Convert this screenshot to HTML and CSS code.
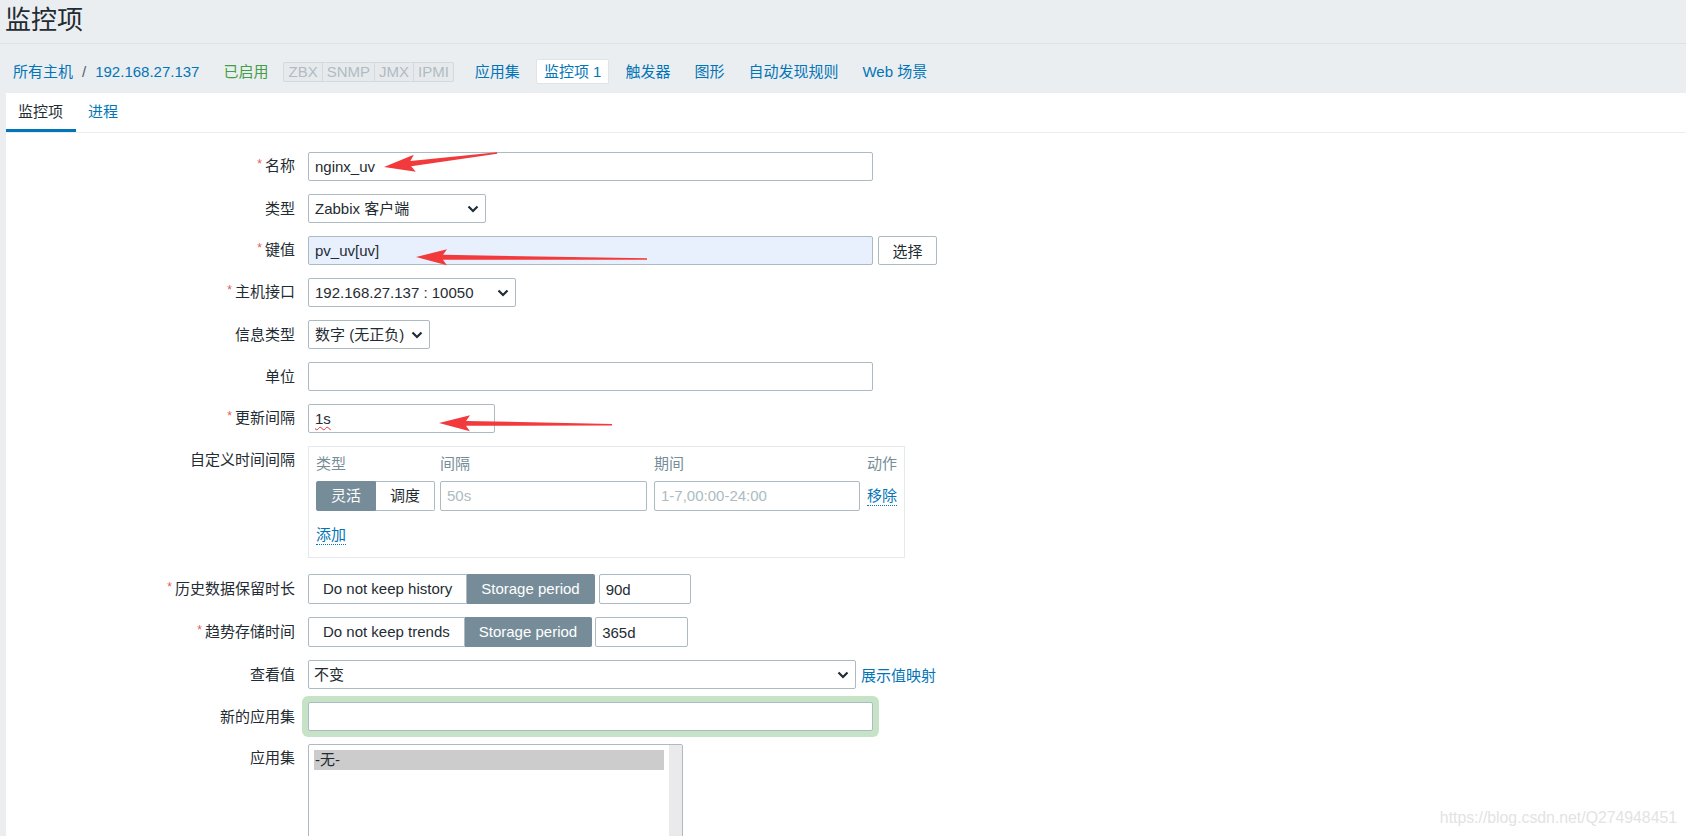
FILE: index.html
```html
<!DOCTYPE html>
<html lang="zh-CN">
<head>
<meta charset="utf-8">
<title>监控项</title>
<link rel="stylesheet" href="styles.css">
</head>
<body>
<header class="page-header">
  <h1 class="page-title">监控项</h1>
</header>

<nav class="host-nav">
  <a class="link crumb">所有主机</a>
  <span class="crumb-sep">/</span>
  <a class="link crumb">192.168.27.137</a>
  <span class="status-on">已启用</span>
  <span class="avail">
    <span class="avail-cell">ZBX</span><span class="avail-cell">SNMP</span><span class="avail-cell">JMX</span><span class="avail-cell">IPMI</span>
  </span>
  <ul class="host-tabs">
    <li><a class="link">应用集</a></li>
    <li class="selected"><a class="link">监控项 1</a></li>
    <li><a class="link">触发器</a></li>
    <li><a class="link">图形</a></li>
    <li><a class="link">自动发现规则</a></li>
    <li><a class="link">Web 场景</a></li>
  </ul>
</nav>

<main class="panel">
  <div class="tabs">
    <a class="tab active">监控项</a>
    <a class="tab link">进程</a>
  </div>

  <form class="form">
    <div class="row">
      <label class="lbl"><span class="req">*</span>名称</label>
      <div class="field"><input class="input w-wide" type="text" value="nginx_uv"></div>
    </div>
    <div class="row">
      <label class="lbl">类型</label>
      <div class="field"><div class="select w-type"><span class="sel-text">Zabbix 客户端</span><svg class="chev" width="12" height="8" viewBox="0 0 12 8"><polyline points="1.5,1.5 6,6 10.5,1.5" fill="none" stroke="#1f2c33" stroke-width="2.2"/></svg></div></div>
    </div>
    <div class="row">
      <label class="lbl"><span class="req">*</span>键值</label>
      <div class="field"><input class="input w-wide autofill" type="text" value="pv_uv[uv]"><button type="button" class="btn-alt">选择</button></div>
    </div>
    <div class="row">
      <label class="lbl"><span class="req">*</span>主机接口</label>
      <div class="field"><div class="select w-iface"><span class="sel-text">192.168.27.137 : 10050</span><svg class="chev" width="12" height="8" viewBox="0 0 12 8"><polyline points="1.5,1.5 6,6 10.5,1.5" fill="none" stroke="#1f2c33" stroke-width="2.2"/></svg></div></div>
    </div>
    <div class="row">
      <label class="lbl">信息类型</label>
      <div class="field"><div class="select w-info"><span class="sel-text">数字 (无正负)</span><svg class="chev" width="12" height="8" viewBox="0 0 12 8"><polyline points="1.5,1.5 6,6 10.5,1.5" fill="none" stroke="#1f2c33" stroke-width="2.2"/></svg></div></div>
    </div>
    <div class="row">
      <label class="lbl">单位</label>
      <div class="field"><input class="input w-wide" type="text" value=""></div>
    </div>
    <div class="row">
      <label class="lbl"><span class="req">*</span>更新间隔</label>
      <div class="field"><div class="input w-delay"><span class="spell">1s</span></div></div>
    </div>
    <div class="row row-top row-intervals">
      <label class="lbl">自定义时间间隔</label>
      <div class="field">
        <div class="intervals">
          <div class="iv-grid">
            <div class="iv-head">类型</div>
            <div class="iv-head">间隔</div>
            <div class="iv-head">期间</div>
            <div class="iv-head">动作</div>
            <div class="radio-group">
              <span class="seg on">灵活</span><span class="seg">调度</span>
            </div>
            <div class="input placeholder">50s</div>
            <div class="input placeholder">1-7,00:00-24:00</div>
            <a class="link dotted">移除</a>
          </div>
          <a class="link dotted add">添加</a>
        </div>
      </div>
    </div>
    <div class="row row-tall">
      <label class="lbl"><span class="req">*</span>历史数据保留时长</label>
      <div class="field">
        <div class="radio-group tall"><span class="seg">Do not keep history</span><span class="seg on">Storage period</span></div>
        <input class="input w-period" type="text" value="90d">
      </div>
    </div>
    <div class="row row-tall">
      <label class="lbl"><span class="req">*</span>趋势存储时间</label>
      <div class="field">
        <div class="radio-group tall"><span class="seg">Do not keep trends</span><span class="seg on">Storage period</span></div>
        <input class="input w-period2" type="text" value="365d">
      </div>
    </div>
    <div class="row">
      <label class="lbl">查看值</label>
      <div class="field"><div class="select w-valuemap"><span class="sel-text">不变</span><svg class="chev" width="12" height="8" viewBox="0 0 12 8"><polyline points="1.5,1.5 6,6 10.5,1.5" fill="none" stroke="#1f2c33" stroke-width="2.2"/></svg></div><a class="link valuemap-link">展示值映射</a></div>
    </div>
    <div class="row">
      <label class="lbl">新的应用集</label>
      <div class="field"><input class="input w-wide highlight" type="text" value=""></div>
    </div>
    <div class="row row-top">
      <label class="lbl">应用集</label>
      <div class="field">
        <div class="listbox">
          <div class="list-items"><div class="opt selected">-无-</div></div>
          <div class="list-scroll"></div>
        </div>
      </div>
    </div>
  </form>
</main>

<svg class="annotations" width="1686" height="836" viewBox="0 0 1686 836">
  <g fill="#f23a3c">
    <polygon transform="translate(384,167) rotate(-7.06)" points="0,0 31,-8.5 27,-2.6 114,-0.7 114,0.7 27,2.6 31,8.5"/>
    <polygon transform="translate(416,257) rotate(0.5)" points="0,0 31,-8 27,-2.4 231,-0.7 231,0.7 27,2.4 31,8"/>
    <polygon transform="translate(439,423) rotate(0.6)" points="0,0 31,-8 27,-2.4 173,-0.7 173,0.7 27,2.4 31,8"/>
  </g>
</svg>

<div class="watermark">https://blog.csdn.net/Q274948451</div>
</body>
</html>
```

FILE: styles.css
```css
html, body {
  margin: 0;
  padding: 0;
  height: 836px;
  overflow: hidden;
}

body {
  background: #ebeef0;
  color: #1f2c33;
  font-family: "Liberation Sans", Arial, "Noto Sans CJK SC", sans-serif;
  font-size: 15px;
  position: relative;
}

.link {
  color: #0275b8;
  text-decoration: none;
  cursor: pointer;
}

/* ---------- page header ---------- */
.page-header {
  height: 43px;
  border-bottom: 1px solid #dde2e6;
  padding: 0 5px;
}

.page-title {
  margin: 0;
  font-size: 26px;
  font-weight: normal;
  line-height: 40px;
  color: #1f2c33;
}

/* ---------- host navigation ---------- */
.host-nav {
  display: flex;
  align-items: center;
  height: 49px;
  padding: 15px 0 9px 13px;
  box-sizing: border-box;
  line-height: 25px;
  white-space: nowrap;
}

.crumb-sep {
  margin: 0 9px 0 9px;
  color: #4f5f68;
}

.status-on {
  color: #429e47;
  margin-left: 24px;
}

.avail {
  display: flex;
  margin-left: 15px;
  border: 1px solid #d3d9dd;
  border-radius: 2px;
  background: #e7eaed;
  height: 20px;
  box-sizing: border-box;
}

.avail-cell {
  color: #b0bcc2;
  line-height: 18px;
  padding: 0 4px;
  border-left: 1px solid #d3d9dd;
}

.avail-cell:first-child {
  border-left: 0;
}

.host-tabs {
  display: flex;
  list-style: none;
  margin: 0 0 0 13px;
  padding: 0;
  gap: 8px;
}

.host-tabs li {
  height: 25px;
  padding: 0 7px;
  box-sizing: border-box;
  border: 1px solid transparent;
  border-radius: 2px;
  line-height: 23px;
}

.host-tabs li.selected {
  background: #ffffff;
  border-color: #dfe4e7;
}

/* ---------- main panel ---------- */
.panel {
  margin-left: 6px;
  background: #ffffff;
  height: 743px;
}

.tabs {
  display: flex;
  border-bottom: 1px solid #ebeef0;
}

.tab {
  padding: 9px 12px 7px 12px;
  line-height: 20px;
  border-bottom: 3px solid transparent;
}

.tab.active {
  color: #1f2c33;
  border-bottom-color: #0275b8;
  padding-right: 13px;
}

/* ---------- form ---------- */
.form {
  display: flex;
  flex-direction: column;
  gap: 13px;
  padding-top: 19px;
}

.row {
  display: flex;
  align-items: center;
  gap: 13px;
}

.row-top {
  align-items: flex-start;
}

.row-intervals {
  margin-bottom: 3px;
}

.lbl {
  width: 289px;
  flex: none;
  text-align: right;
  line-height: 28px;
  color: #1f2c33;
}

.req {
  color: #e45959;
  font-size: 12px;
  margin-right: 3px;
  position: relative;
  top: -3px;
}

.field {
  display: flex;
  align-items: center;
}

.input {
  box-sizing: border-box;
  height: 29px;
  border: 1px solid #acbbc2;
  border-radius: 2px;
  padding: 0 6px;
  font: inherit;
  font-size: 15px;
  color: #1f2c33;
  background: #ffffff;
  line-height: 27px;
  outline: none;
  white-space: nowrap;
}

.w-wide { width: 565px; }
.w-delay { width: 187px; }
.w-period { width: 92px; margin-left: 4px; height: 30px; }
.w-period2 { width: 93px; margin-left: 3px; height: 30px; }

.autofill {
  background: #e8f0fe;
}

.highlight {
  box-shadow: 0 0 0 6px #c6e3c8;
  border-radius: 2px;
}

.spell {
  text-decoration: underline wavy #e53535;
  text-decoration-skip-ink: none;
  text-underline-offset: 2px;
  text-decoration-thickness: 1px;
}

.btn-alt {
  margin-left: 5px;
  height: 29px;
  width: 59px;
  box-sizing: border-box;
  border: 1px solid #acbbc2;
  border-radius: 2px;
  background: #ffffff;
  color: #1f2c33;
  font: inherit;
  font-size: 15px;
  padding: 0;
}

.select {
  box-sizing: border-box;
  height: 29px;
  border: 1px solid #acbbc2;
  border-radius: 2px;
  padding: 0 6px 0 6px;
  display: flex;
  align-items: center;
  justify-content: space-between;
  background: #ffffff;
  line-height: 27px;
  white-space: nowrap;
  overflow: hidden;
}

.sel-text {
  white-space: nowrap;
  flex: none;
}

.chev {
  flex: none;
  margin-left: 4px;
}

.w-type { width: 178px; }
.w-iface { width: 208px; }
.w-info { width: 122px; }
.w-valuemap { width: 548px; padding-left: 5px; }

.valuemap-link {
  margin-left: 5px;
}

/* ---------- custom intervals ---------- */
.intervals {
  width: 597px;
  box-sizing: border-box;
  border: 1px solid #e6e9eb;
  padding: 7px 7px 12px 7px;
}

.iv-grid {
  display: grid;
  grid-template-columns: 117px 207px 206px auto;
  column-gap: 7px;
  row-gap: 7px;
  align-items: center;
}

.iv-head {
  color: #768d99;
  line-height: 20px;
}

.placeholder {
  color: #acbbc2;
  height: 30px;
  line-height: 28px;
}

.dotted {
  border-bottom: 1px dotted #0275b8;
  line-height: 19px;
  justify-self: start;
}

.add {
  display: inline-block;
  margin-top: 14px;
}

.radio-group {
  display: flex;
  height: 30px;
}

.seg {
  box-sizing: border-box;
  height: 30px;
  line-height: 28px;
  padding: 0 14px;
  border: 1px solid #acbbc2;
  background: #ffffff;
  color: #1f2c33;
  white-space: nowrap;
}

.seg:first-child {
  border-radius: 2px 0 0 2px;
}

.seg:last-child {
  border-radius: 0 2px 2px 0;
  border-left: 0;
}

.seg.on {
  background: #768d99;
  border-color: #768d99;
  color: #ffffff;
}

/* ---------- listbox ---------- */
.listbox {
  width: 375px;
  height: 110px;
  box-sizing: border-box;
  border: 1px solid #acbbc2;
  border-radius: 2px;
  display: flex;
  background: #ffffff;
}

.list-items {
  flex: 1;
  padding: 5px 5px 0 5px;
}

.opt {
  line-height: 20px;
  padding-left: 1px;
}

.opt.selected {
  background: #cccccc;
  color: #1f2c33;
}

.list-scroll {
  width: 13px;
  background: #eaeaea;
}

/* ---------- overlays ---------- */
.annotations {
  position: absolute;
  top: 0;
  left: 0;
  pointer-events: none;
}

.watermark {
  position: absolute;
  right: 9px;
  top: 808px;
  font-size: 15.8px;
  line-height: 20px;
  color: #e3e3e3;
  font-family: "Liberation Sans", Arial, sans-serif;
}
```
